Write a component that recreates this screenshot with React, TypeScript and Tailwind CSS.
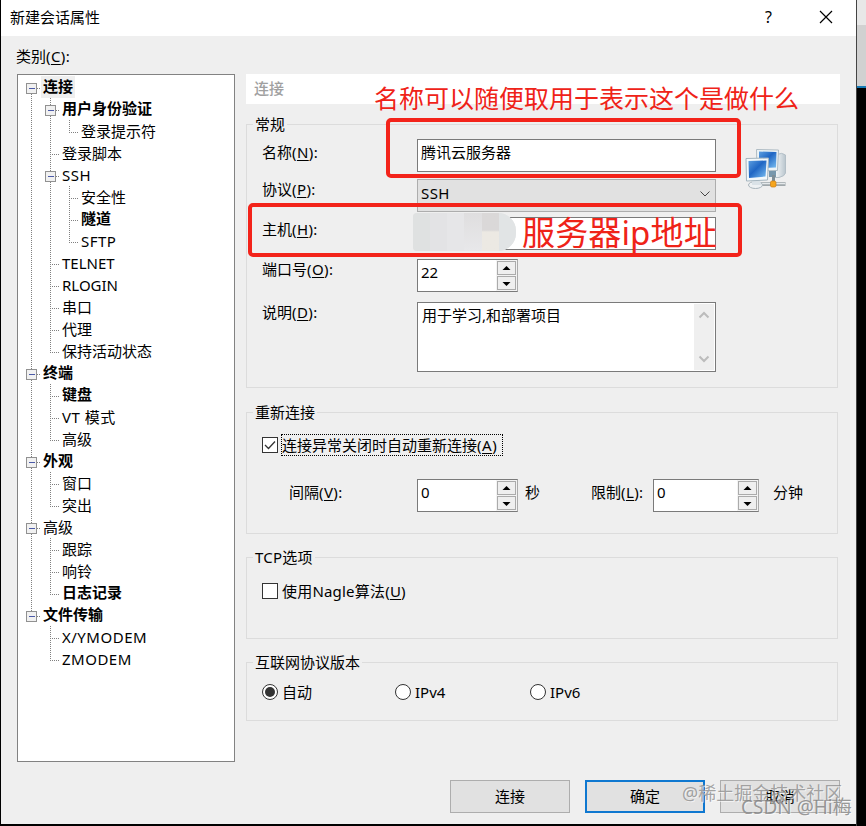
import React from 'react';

// One guide character per tree column:
// F/B/L = first/middle/last expander box, | = line, + = branch, ` = last branch
const treeRows = [
  { guides: 'F', label: '连接', bold: true, selected: true },
  { guides: '|B', label: '用户身份验证', bold: true },
  { guides: '||`', label: '登录提示符' },
  { guides: '|+', label: '登录脚本' },
  { guides: '|B', label: 'SSH', latin: true },
  { guides: '||+', label: '安全性' },
  { guides: '||+', label: '隧道', bold: true },
  { guides: '||`', label: 'SFTP', latin: true },
  { guides: '|+', label: 'TELNET' },
  { guides: '|+', label: 'RLOGIN' },
  { guides: '|+', label: '串口' },
  { guides: '|+', label: '代理' },
  { guides: '|`', label: '保持活动状态' },
  { guides: 'B', label: '终端', bold: true },
  { guides: '|+', label: '键盘', bold: true },
  { guides: '|+', label: 'VT 模式', latin: true },
  { guides: '|`', label: '高级' },
  { guides: 'B', label: '外观', bold: true },
  { guides: '|+', label: '窗口' },
  { guides: '|`', label: '突出' },
  { guides: 'B', label: '高级' },
  { guides: '|+', label: '跟踪' },
  { guides: '|+', label: '响铃' },
  { guides: '|`', label: '日志记录', bold: true },
  { guides: 'L', label: '文件传输', bold: true },
  { guides: ' +', label: 'X/YMODEM', latin: true },
  { guides: ' `', label: 'ZMODEM', latin: true },
];

function Guide({ type }: { type: string }) {
  const up = type !== 'F' && type !== ' ';
  const down = 'FB|+'.includes(type);
  const box = 'FBL'.includes(type);
  return (
    <svg width="19" height="22" viewBox="0 0 19 22" className="shrink-0" shapeRendering="crispEdges">
      <g stroke="#808080" strokeDasharray="1 1">
        {up && <path d="M9.5 0V12" />}
        {down && <path d="M9.5 12V22" />}
        {type !== '|' && type !== ' ' && <path d="M9 12.5H18" />}
      </g>
      {box && (
        <g>
          <rect x="4.5" y="7.5" width="10" height="10" rx="1" fill="#f1f1f1" stroke="#919191" />
          <path d="M7 12.5H13" stroke="#4b5aa7" />
        </g>
      )}
    </svg>
  );
}

function Label({ text, hotkey, className = '' }: { text: string; hotkey: string; className?: string }) {
  return (
    <span className={`whitespace-nowrap ${className}`}>
      {text}
      <span className="tracking-[0.4px]">
        (<span className="underline underline-offset-2">{hotkey}</span>):
      </span>
    </span>
  );
}

function Group({ title, className, children }: { title: string; className: string; children: React.ReactNode }) {
  return (
    <section className={`w-[592px] border border-[#dcdcdc] flex flex-col ${className}`}>
      <h2 className="self-start -mt-[12px] ml-[6px] px-[2px] h-[22px] bg-[#efefef]">{title}</h2>
      {children}
    </section>
  );
}

function Spinner({ value, className }: { value: string; className: string }) {
  return (
    <div className={`h-[33px] flex border border-[#7a7a7a] border-r-[#ababab] bg-white shrink-0 ${className}`}>
      <span className="flex-1 pl-[3px] pt-px">{value}</span>
      <div className="w-[21px] flex flex-col gap-px p-px bg-[#f3f3f3]">
        {['M6.5 4L10.5 8H2.5Z', 'M2.5 5H10.5L6.5 9Z'].map((d) => (
          <button key={d} className="flex-1 border border-[#ababab] bg-[#efefef] flex items-center justify-center">
            <svg width="13" height="12" viewBox="0 0 13 12">
              <path d={d} fill="#000" />
            </svg>
          </button>
        ))}
      </div>
    </div>
  );
}

function ComputersIcon() {
  return (
    <svg width="42" height="42" viewBox="0 0 42 42">
      <defs>
        <linearGradient id="screen" x1="0" y1="0" x2="1" y2="1">
          <stop offset="0" stopColor="#5d9fe0" />
          <stop offset="0.45" stopColor="#1f66c4" />
          <stop offset="1" stopColor="#7cc0f2" />
        </linearGradient>
        <linearGradient id="tower" x1="0" y1="0" x2="1" y2="0">
          <stop offset="0" stopColor="#f8fafb" />
          <stop offset="1" stopColor="#b9c5cd" />
        </linearGradient>
      </defs>
      <path d="M32 6.5Q37 4 40.5 7V25Q40 28 34 29.5H30V7Z" fill="url(#tower)" stroke="#b3bfc7" />
      <path d="M11.5 1.5L33.5 2L32.5 22.5L12 23Z" fill="#edf4f7" stroke="#aebbc3" />
      <path d="M14 3.5L31.5 4L31 19.5L14 20Z" fill="url(#screen)" />
      <path d="M24 23H31V29H24Z" fill="#7898ad" />
      <path d="M16 36H40.5" stroke="#a0a8ac" strokeWidth="4" />
      <path d="M16 35.5H40" stroke="#e5e9eb" strokeWidth="1.5" />
      <path d="M28.5 27V36" stroke="#7e8e97" strokeWidth="3" />
      <rect x="25.5" y="33" width="5.5" height="6" rx="1.5" fill="#f5a51e" stroke="#cc7b12" strokeWidth="0.7" />
      <ellipse cx="10.5" cy="37" rx="7" ry="3.5" fill="#eef1f3" stroke="#a9b5bc" />
      <path d="M7 32H15L16 37H7Z" fill="#dae2e7" />
      <path d="M1 10.5L23.5 10L22.5 32L1.5 33Z" fill="#f2f8fb" stroke="#a4b4be" />
      <path d="M3.5 13L21.5 12.5L20.5 28.5L4 30Z" fill="url(#screen)" />
    </svg>
  );
}

function App() {
  return (
    <div className="relative w-[866px] h-[826px] overflow-hidden bg-black flex text-[15px] leading-[22px] text-black font-['Noto_Sans','Noto_Sans_CJK_SC',sans-serif]">
      {/* Dialog */}
      <div className="w-[855px] h-[824px] ml-px bg-[#efefef] flex flex-col">
        <header className="h-9 bg-white flex items-center justify-between pl-[9px] pr-[23px] shrink-0">
          <h1 className="-mt-[2px]">新建会话属性</h1>
          <div className="flex items-center gap-[47px] -mt-[2px]">
            <span className="text-[16px]">?</span>
            <svg width="14" height="14" viewBox="0 0 14 14" stroke="#000" strokeWidth="1.2">
              <path d="M1 1L13 13M13 1L1 13" />
            </svg>
          </div>
        </header>

        <p className="pl-[15px] pt-[9px] h-[38px] shrink-0"><Label text="类别" hotkey="C" /></p>

        <main className="flex pl-4 gap-[11px] shrink-0">
          {/* Category tree */}
          <ul className="w-[218px] h-[688px] border border-[#828282] bg-white pl-1 pt-px">
            {treeRows.map((row, index) => (
              <li key={index} className="flex h-[22px]">
                {row.guides.split('').map((type, i) => (
                  <Guide key={i} type={type} />
                ))}
                <span
                  className={`h-[22px] px-[2px] ${row.selected ? 'bg-[#efefef]' : ''} ${row.bold ? 'font-bold leading-[20px]' : ''} ${row.latin ? 'tracking-[0.5px]' : ''}`}
                >
                  {row.label}
                </span>
              </li>
            ))}
          </ul>

          {/* Settings */}
          <div className="flex flex-col">
            <div className="w-[594px] h-[30px] bg-white pl-2 pt-[3px] font-medium text-[#a0a0a0] mb-5">连接</div>

            <Group title="常规" className="h-[264px]">
              <div className="flex">
                <div className="flex flex-col w-[470px] pl-[15px] pt-1">
                  <div className="flex mb-[7px]">
                    <Label text="名称" hotkey="N" className="w-[155px] pt-[2px]" />
                    <div className="w-[299px] h-[33px] border border-[#7a7a7a] bg-white pl-[3px] pt-px">腾讯云服务器</div>
                  </div>
                  <div className="flex mb-[5px]">
                    <Label text="协议" hotkey="P" className="w-[155px] -mt-px" />
                    <div className="w-[299px] h-[33px] border border-[#adadad] bg-[#e1e1e1] pl-[3px] pr-1 flex items-center justify-between">
                      <span className="-mt-[6px] tracking-[0.4px]">SSH</span>
                      <svg width="12" height="8" viewBox="0 0 12 8" fill="none" stroke="#444" className="-mt-1">
                        <path d="M1.5 1.5L6 6L10.5 1.5" />
                      </svg>
                    </div>
                  </div>
                  <div className="flex mb-[9px]">
                    <Label text="主机" hotkey="H" className="w-[155px] pt-px" />
                    <div className="w-[299px] h-[33px] border border-[#7a7a7a] bg-white" />
                  </div>
                  <div className="flex mb-[10px]">
                    <Label text="端口号" hotkey="O" className="w-[155px] -mt-px" />
                    <Spinner value="22" className="w-[101px]" />
                  </div>
                  <div className="flex">
                    <Label text="说明" hotkey="D" className="w-[155px] -mt-px" />
                    <div className="w-[299px] h-[70px] border border-[#7a7a7a] bg-white p-px flex justify-between">
                      <span className="pl-[3px]">用于学习,和部署项目</span>
                      <div className="w-[20px] bg-[#efefef] flex flex-col items-center justify-between py-[7px]">
                        <svg width="12" height="8" viewBox="0 0 12 8" fill="none" stroke="#bcbcbc" strokeWidth="2">
                          <path d="M1.5 6.5L6 2L10.5 6.5" />
                        </svg>
                        <svg width="12" height="8" viewBox="0 0 12 8" fill="none" stroke="#bcbcbc" strokeWidth="2">
                          <path d="M1.5 1.5L6 6L10.5 1.5" />
                        </svg>
                      </div>
                    </div>
                  </div>
                </div>
                <div className="pl-[28px] pt-[13px]">
                  <ComputersIcon />
                </div>
              </div>
            </Group>

            <Group title="重新连接" className="h-[122px] mt-6">
              <div className="flex items-center pl-[15px] h-[24px] mt-[10px]">
                <svg width="16" height="16" viewBox="0 0 16 16" className="mr-[3px]" fill="none">
                  <rect x="0.5" y="0.5" width="15" height="15" fill="#fff" stroke="#333" />
                  <path d="M3 8L6.5 11.5L13 4.5" stroke="#333" strokeWidth="1.3" />
                </svg>
                <span className="w-[222px] h-[22px] border border-dotted border-black leading-[20px] whitespace-nowrap">
                  连接异常关闭时自动重新连接<span className="tracking-[0.5px]">(<span className="underline underline-offset-2">A</span>)</span>
                </span>
              </div>
              <div className="flex pl-[42px] mt-[22px]">
                <Label text="间隔" hotkey="V" className="w-[128px] pt-[2px]" />
                <Spinner value="0" className="w-[101px]" />
                <span className="pl-[7px] w-[73px] pt-[2px]">秒</span>
                <Label text="限制" hotkey="L" className="w-[62px] pt-[2px]" />
                <Spinner value="0" className="w-[106px]" />
                <span className="pl-[14px] pt-[2px]">分钟</span>
              </div>
            </Group>

            <Group title="TCP选项" className="h-[82px] mt-[23px] tracking-[0.2px]">
              <div className="flex items-center gap-[4px] pl-[15px] mt-3">
                <span className="size-4 border border-[#333] bg-white" />
                <span>使用Nagle算法(<span className="underline underline-offset-2">U</span>)</span>
              </div>
            </Group>

            <Group title="互联网协议版本" className="h-[59px] mt-[23px]">
              <div className="flex items-center pl-[15px] mt-[8px]">
                {['自动', 'IPv4', 'IPv6'].map((option, index) => (
                  <div key={option} className={index === 0 ? 'flex items-center gap-1 w-[133px]' : 'flex items-center gap-1 w-[135px]'}>
                    <svg width="16" height="16" viewBox="0 0 16 16">
                      <circle cx="8" cy="8" r="7.5" fill="#fff" stroke="#333" />
                      {index === 0 && <circle cx="8" cy="8" r="5" fill="#333" />}
                    </svg>
                    <span>{option}</span>
                  </div>
                ))}
              </div>
            </Group>
          </div>
        </main>

        {/* Buttons */}
        <footer className="flex gap-[15px] pl-[449px] mt-[18px]">
          <button className="w-[120px] h-[33px] pb-[2px] border border-[#adadad] bg-[#e1e1e1]">连接</button>
          <button className="w-[120px] h-[33px] pb-[2px] border-2 border-[#0f78d0] bg-[#e1e1e1]">确定</button>
          <button className="w-[120px] h-[33px] pb-[2px] border border-[#adadad] bg-[#e1e1e1]">取消</button>
        </footer>
      </div>

      {/* Window behind the dialog */}
      <div className="w-[10px] flex flex-col border-l border-[#444]">
        <div className="h-[25px] bg-[#e8e8e8]" />
        <div className="h-[61px] bg-[#d1d1d1]" />
        <div className="h-[2px] bg-[#1679b5]" />
      </div>

      {/* Smudged address */}
      <div className="absolute left-[413px] top-[213px] w-[103px] h-[38px] rounded-l-[4px] rounded-r-[18px] overflow-hidden bg-[#e6e6e7] grid grid-cols-6">
        <span className="bg-[#dfe1e1]" />
        <span className="bg-[#e3e3e5]" />
        <span className="bg-[#e6e6e8]" />
        <span className="bg-linear-to-b from-[#dfdedf] to-[#e8e8ea]" />
        <span className="bg-linear-to-b from-[#dad8d8] from-45% to-[#ece9e3] to-50%" />
        <span className="bg-[#e1e4e5]" />
      </div>

      {/* Annotations */}
      <div className="absolute left-[386px] top-[118px] w-[355px] h-[60px] border-4 border-[#f3231a] rounded-[5px]" />
      <div className="absolute left-[248px] top-[203px] w-[494px] h-[54px] border-4 border-[#f3231a] rounded-[5px]" />
      <p className="absolute left-[374px] top-[82px] text-[25px] leading-[32px] text-[#ef2318] whitespace-nowrap">名称可以随便取用于表示这个是做什么</p>
      <p className="absolute left-[522px] top-[213px] text-[33px] leading-[40px] tracking-[0.15px] text-[#ef2318] whitespace-nowrap">服务器ip地址</p>

      {/* Watermarks */}
      <p className="absolute left-[682px] top-[781px] text-[18px] leading-[24px] text-[#8e8e8e]/80 whitespace-nowrap [text-shadow:1px_1px_0_#fff9]">@稀土掘金技术社区</p>
      <p className="absolute left-[741px] top-[795px] text-[19px] leading-[24px] text-[#808080]/80 whitespace-nowrap [text-shadow:1px_1px_0_#fff9]">CSDN @Hi梅</p>
    </div>
  );
}

export default App;
